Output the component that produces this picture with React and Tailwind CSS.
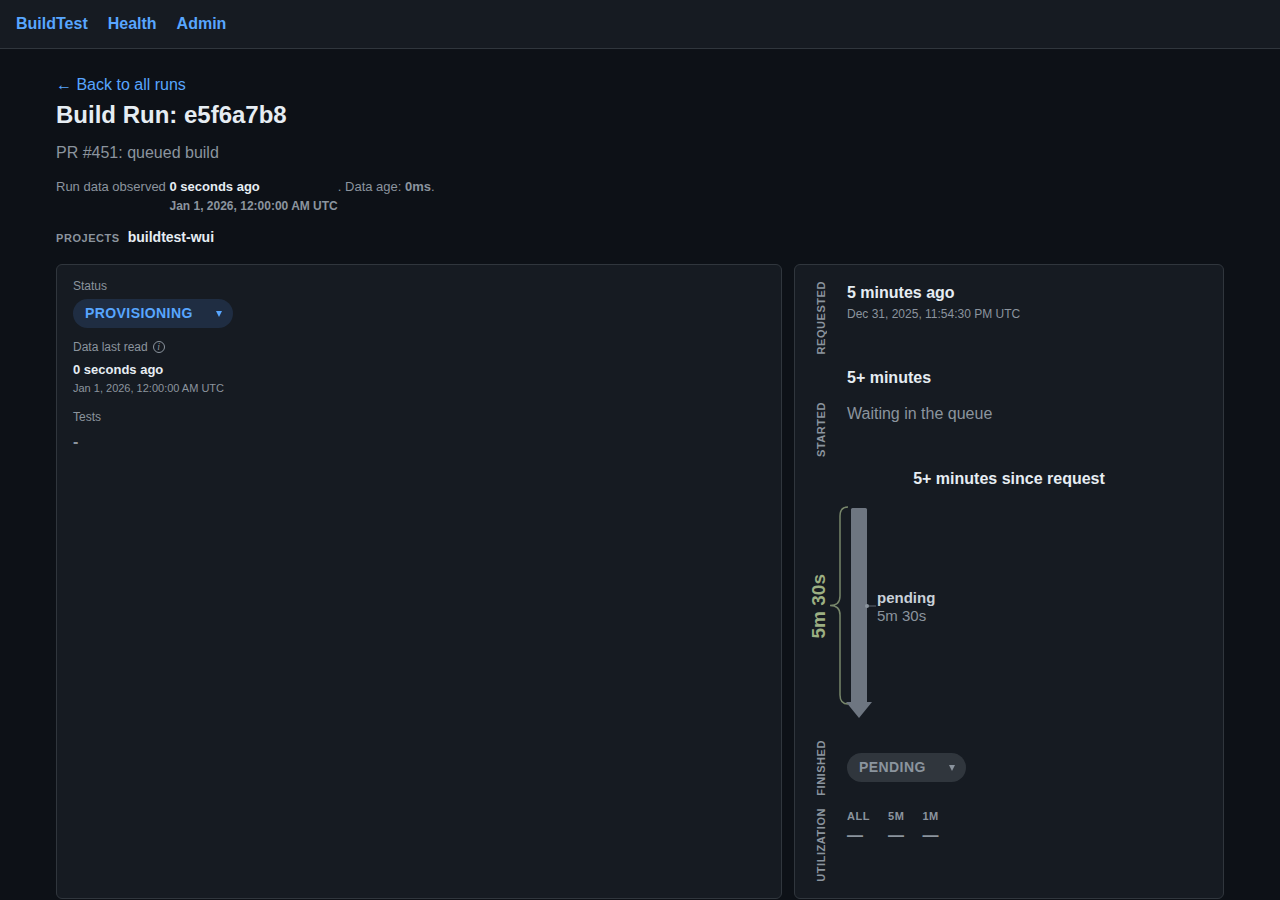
const navLinks = ['BuildTest', 'Health', 'Admin']

const utilization = [
  { label: 'All', value: '—' },
  { label: '5m', value: '—' },
  { label: '1m', value: '—' },
]

function Header() {
  return (
    <header className="border-b border-[#30363d] bg-[#161b22]">
      <nav className="flex h-12 items-center gap-5 px-4">
        {navLinks.map((name) => (
          <a key={name} href="#" className="font-bold text-[#58a6ff]">
            {name}
          </a>
        ))}
      </nav>
    </header>
  )
}

function StatusPill({ children, className }) {
  return (
    <button
      type="button"
      className={`flex items-center gap-[23px] rounded-full pr-[11px] pl-3 py-1 text-sm leading-[21px] font-bold tracking-[0.03em] uppercase ${className}`}
    >
      {children}
      <svg viewBox="0 0 6 6" className="h-[6px] w-[6px]" aria-hidden="true">
        <path d="M0 0H6L3 6Z" fill="currentColor" />
      </svg>
    </button>
  )
}

function VerticalLabel({ children }) {
  return (
    <div className="flex w-5 shrink-0 justify-center">
      <h2 className="rotate-180 text-[11px] leading-4 font-bold tracking-wider whitespace-nowrap text-[#8b949e] uppercase [writing-mode:vertical-rl]">
        {children}
      </h2>
    </div>
  )
}

function TimelineRow({ label, children }) {
  return (
    <section className="flex gap-4">
      <VerticalLabel>{label}</VerticalLabel>
      <div>{children}</div>
    </section>
  )
}

function DurationChart() {
  return (
    <div className="mt-[5px] mb-[22px] flex items-center">
      <div className="w-5 rotate-180 text-[19px] leading-4 font-bold text-[#9caf82] [writing-mode:vertical-rl]">
        5m 30s
      </div>
      <svg viewBox="0 0 46 200" className="h-[200px] w-[46px] overflow-visible" aria-hidden="true">
        <path
          d="M17 1C12 1 9 4 9 10V90C9 96 6 99.500 -1 99.500C6 99.500 9 103 9 109V189C9 195 12 198 17 198"
          fill="none"
          stroke="#77866a"
          strokeWidth="1.500"
        />
        <rect x="20" y="2" width="16" height="196" rx="1.500" fill="#6e7681" />
        <path d="M15 196H41L28 212Z" fill="#6e7681" />
        <path d="M36 100H45" stroke="#484f58" strokeWidth="1.500" />
        <circle cx="36" cy="100" r="2" fill="#8b949e" />
      </svg>
      <div className="pt-[2px] text-[15px] leading-[18px]">
        <div className="font-bold text-[#c9d1d9]">pending</div>
        <div className="text-[#8b949e]">5m 30s</div>
      </div>
    </div>
  )
}

function StatusPanel() {
  return (
    <section className="rounded-md border border-[#30363d] bg-[#161b22] px-4 py-3">
      <h2 className="text-xs leading-[18px] text-[#8b949e]">Status</h2>
      <StatusPill className="mt-1 bg-[#1f2d42] text-[#58a6ff]">Provisioning</StatusPill>

      <h2 className="mt-[10px] flex items-center gap-[5px] text-xs leading-[18px] text-[#8b949e]">
        Data last read
        <span className="flex h-3 w-3 items-center justify-center rounded-full border border-[#8b949e] font-['Liberation_Serif',serif] text-[10px] leading-none italic">
          i
        </span>
      </h2>
      <div className="mt-1 text-[13px] leading-5 font-bold">0 seconds ago</div>
      <div className="text-[11px] leading-4 text-[#8b949e]">Jan 1, 2026, 12:00:00 AM UTC</div>

      <h2 className="mt-3 text-xs leading-[18px] text-[#8b949e]">Tests</h2>
      <div className="mt-1 font-bold text-[#8b949e]">-</div>
    </section>
  )
}

function TimelinePanel() {
  return (
    <section className="flex flex-col gap-3 rounded-md border border-[#30363d] bg-[#161b22] p-4">
      <TimelineRow label="Requested">
        <div className="font-bold">5 minutes ago</div>
        <div className="text-xs leading-[18px] text-[#8b949e]">Dec 31, 2025, 11:54:30 PM UTC</div>
      </TimelineRow>
      <div className="pl-9 font-bold">5+ minutes</div>
      <TimelineRow label="Started">
        <div className="text-[#8b949e]">Waiting in the queue</div>
      </TimelineRow>
      <div className="text-center leading-5 font-bold">5+ minutes since request</div>
      <DurationChart />
      <TimelineRow label="Finished">
        <StatusPill className="mt-[13px] bg-[#30363d] text-[#8b949e]">Pending</StatusPill>
      </TimelineRow>
      <TimelineRow label="Utilization">
        <dl className="flex gap-[18px] font-bold text-[#8b949e]">
          {utilization.map((item) => (
            <div key={item.label}>
              <dt className="text-[11px] leading-4 tracking-wider uppercase">{item.label}</dt>
              <dd>{item.value}</dd>
            </div>
          ))}
        </dl>
      </TimelineRow>
    </section>
  )
}

function App() {
  return (
    <div className="min-h-screen bg-[#0d1117] font-['Liberation_Sans',Arial,sans-serif] text-base text-[#e6edf3]">
      <Header />
      <main className="mx-auto max-w-[1200px] px-4 pt-6">
        <a href="#" className="text-[#58a6ff]">
          ← Back to all runs
        </a>
        <h1 className="text-2xl leading-9 font-bold">Build Run: e5f6a7b8</h1>
        <p className="mt-2 text-[#8b949e]">PR #451: queued build</p>
        <p className="mt-3 text-[13px] leading-5 text-[#8b949e]">
          Run data observed{' '}
          <span className="inline-grid align-baseline font-bold">
            <span className="text-[#e6edf3]">0 seconds ago</span>
            <span className="text-xs leading-[18px]">Jan 1, 2026, 12:00:00 AM UTC</span>
          </span>
          . Data age: <strong>0ms</strong>.
        </p>
        <div className="mt-3 flex items-baseline gap-2">
          <span className="text-[11px] font-bold tracking-wider text-[#8b949e] uppercase">Projects</span>
          <span className="text-sm font-bold">buildtest-wui</span>
        </div>
        <div className="mt-[17px] grid grid-cols-[minmax(0,1fr)_430px] gap-3">
          <StatusPanel />
          <TimelinePanel />
        </div>
      </main>
    </div>
  )
}

export default App
